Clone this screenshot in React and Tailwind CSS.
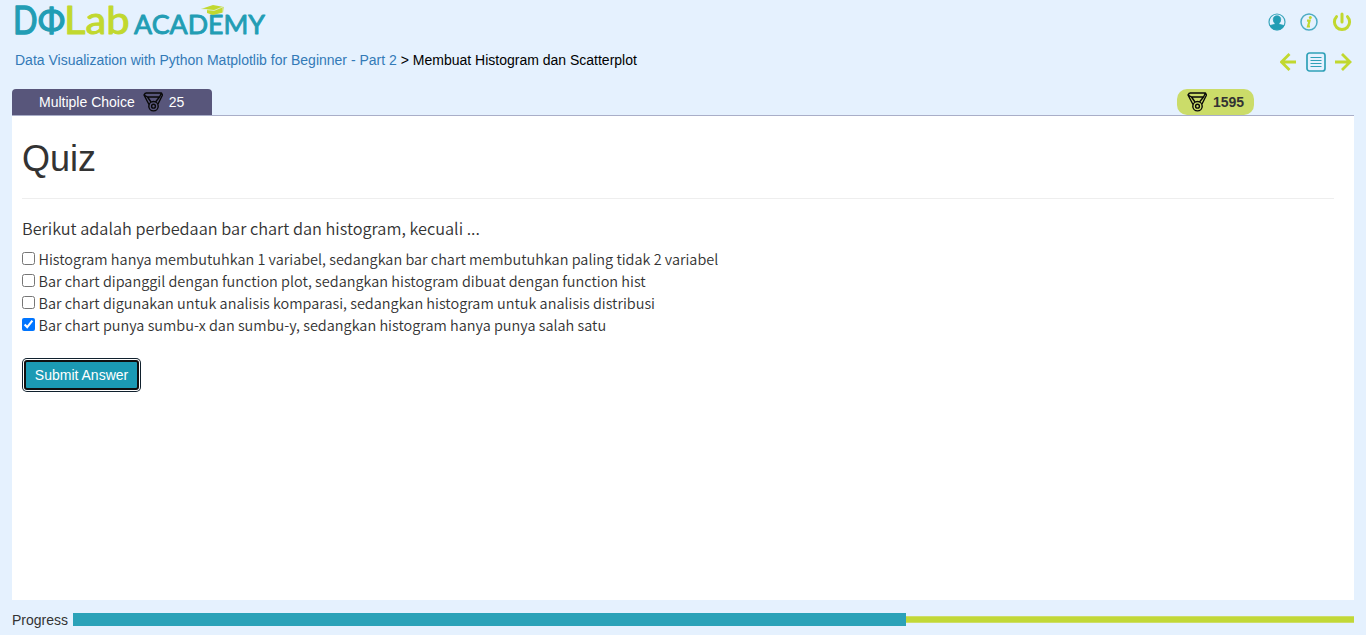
import React from 'react';

function Logo() {
  return (
    <svg width="256" height="42" viewBox="0 0 256 42" className="overflow-visible" fontFamily="Lato, sans-serif" strokeLinejoin="round">
      <g fill="#229db4" stroke="#229db4" strokeWidth="0.9">
        <text x="0" y="33.700" fontSize="38" textLength="24.500" lengthAdjust="spacingAndGlyphs" strokeWidth="1.4">D</text>
        <text x="25" y="31.500" fontSize="33" textLength="27" lengthAdjust="spacingAndGlyphs" strokeWidth="1.4">Φ</text>
        <text x="121" y="34.200" fontSize="27.500" textLength="131" lengthAdjust="spacingAndGlyphs">ACADEMY</text>
      </g>
      <g fill="#c1d82f" stroke="#c1d82f">
        <text x="51" y="33.700" fontSize="38.500" textLength="65.500" lengthAdjust="spacingAndGlyphs" strokeWidth="1">Lab</text>
      </g>
      <path d="m188 9 12-4 11 2-1 5.500-10 2.500-6-2V9.500Z" fill="#c1d82f" />
      <path d="m189 9 12 1.500 8.500-3.500M210 7v6" fill="none" stroke="#e5f1fe" strokeWidth=".7" />
    </svg>
  );
}

function Medal() {
  return (
    <svg width="20" height="20" viewBox="0 0 20 20" fill="none" stroke="#080808" strokeWidth="1.4" strokeLinejoin="round">
      <path d="M2.500 1h16l1 2-4.500 9M18.500 1l-2 4h-12L1 3l1.500-2M1 3l5 9.500M4.500 5 8 10M16.500 5 12.500 10" />
      <circle cx="10.500" cy="14.200" r="4.700" />
      <circle cx="10.500" cy="14.200" r="1.900" />
    </svg>
  );
}

function UserIcon() {
  return (
    <svg width="18" height="18" viewBox="0 0 18 18">
      <circle cx="9" cy="9" r="8" fill="#e5f1fe" stroke="#3ba6bc" strokeWidth="1.200" />
      <path d="M9 2.800c-2.500 0-3.900 1.700-3.700 4 .1 1.700.8 2.800 1.700 3.700v.8L2 12.500A7.800 7.800 0 0 0 16 12.500L11 11.300v-.8c.9-.9 1.600-2 1.700-3.700.2-2.300-1.200-4-3.700-4Z" fill="#229db4" stroke="#229db4" strokeWidth=".8" />
    </svg>
  );
}

function InfoIcon() {
  return (
    <svg width="18" height="18" viewBox="0 0 18 18">
      <circle cx="9" cy="9" r="8" fill="none" stroke="#4cacc3" strokeWidth="1.500" />
      <circle cx="10.300" cy="4.500" r="1.500" fill="#c1d82f" />
      <path d="M7 7.700h2.600L8 13.500h2" fill="none" stroke="#c1d82f" strokeWidth="2.200" />
    </svg>
  );
}

function PowerIcon() {
  return (
    <svg width="20" height="20" viewBox="0 0 20 20" fill="none" stroke="#c1d82f" strokeWidth="3" strokeLinecap="round">
      <path d="M10 2v8M4.500 4.700a7.600 7.600 0 1 0 11 0" />
    </svg>
  );
}

function Arrow({ right }) {
  return (
    <svg width="17" height="18" viewBox="0 0 17 18" fill="none" stroke="#c1d82f" strokeWidth="2.800">
      {right ? <path d="M0 9h14M7 1l8 8-8 8" /> : <path d="M16 9H2M9.500 1l-8 8 8 8" />}
    </svg>
  );
}

function ListIcon() {
  return (
    <svg width="20" height="20" viewBox="0 0 20 20" fill="none" stroke="#2fa1b8">
      <rect x="1" y="1" width="18" height="18" rx="2.500" strokeWidth="1.700" />
      <path d="M4.500 5.500h11M4.500 8.500h11M4.500 11.500h11M4.500 14.500h11" strokeWidth="1" />
    </svg>
  );
}

const options = [
  { text: 'Histogram hanya membutuhkan 1 variabel, sedangkan bar chart membutuhkan paling tidak 2 variabel', checked: false },
  { text: 'Bar chart dipanggil dengan function plot, sedangkan histogram dibuat dengan function hist', checked: false },
  { text: 'Bar chart digunakan untuk analisis komparasi, sedangkan histogram untuk analisis distribusi', checked: false },
  { text: 'Bar chart punya sumbu-x dan sumbu-y, sedangkan histogram hanya punya salah satu', checked: true },
];

export default function App() {
  return (
    <div className="flex h-[635px] w-full flex-col overflow-hidden bg-[#e5f1fe] px-3 font-['Liberation_Sans',sans-serif] text-sm leading-5 text-[#333]">
      <header className="flex h-[42px] shrink-0 justify-between pl-px pr-[2px]">
        <Logo />
        <div className="flex h-[43px] items-center gap-[14px]">
          <UserIcon />
          <InfoIcon />
          <PowerIcon />
        </div>
      </header>
      <div className="flex h-[47px] shrink-0 justify-between pl-[3px] pr-[2px]">
        <nav className="pt-2 text-black">
          <a className="text-[#337ab7]">Data Visualization with Python Matplotlib for Beginner - Part 2</a> &gt; Membuat Histogram dan Scatterplot
        </nav>
        <div className="flex h-[39px] items-center gap-[9px]">
          <Arrow />
          <ListIcon />
          <Arrow right />
        </div>
      </div>
      <div className="flex h-[27px] shrink-0 justify-between border-b border-[#a9aec8] pr-[100px]">
        <div className="flex h-[26px] w-[200px] items-center rounded-t-[4px] bg-[#58567b] pl-[27px] text-white">
          <span className="mr-[8px]">Multiple Choice</span>
          <Medal />
          <span className="ml-[6px]">25</span>
        </div>
        <div className="flex h-[26px] w-[77px] items-center rounded-[10px] bg-[#cbdc69] pl-[10px] font-bold">
          <Medal />
          <span className="ml-[6px]">1595</span>
        </div>
      </div>
      <main className="h-[484px] shrink-0 bg-white pl-[10px] pr-5">
        <h1 className="h-[83px] border-b border-[#eee] pt-[23px] text-[36px] leading-[40px]">Quiz</h1>
        <p className="mt-[15px] font-['Noto_Sans_CJK_SC',sans-serif] text-[16.31px] font-[350] leading-[28px]">Berikut adalah perbedaan bar chart dan histogram, kecuali ...</p>
        <div className="mt-[7px] font-['Noto_Sans_CJK_SC',sans-serif] text-[14.47px] font-[350]">
          {options.map((option) => (
            <label key={option.text} className="flex h-[22px] leading-[20px]">
              <input type="checkbox" defaultChecked={option.checked} className="mt-[3px] mr-[3.5px] h-[13px] w-[13px] accent-[#0075ff]" />
              <span>{option.text}</span>
            </label>
          ))}
        </div>
        <button className="mt-[23px] ml-[2px] flex h-[30px] w-[115px] items-center justify-center rounded-[3px] border-2 border-[#101010] bg-[#1b9ab4] text-white shadow-[0_0_0_1px_#fff,0_0_0_2px_#10202d]">Submit Answer</button>
      </main>
      <footer className="flex h-[39px] shrink-0 items-center">
        <span className="w-[61px]">Progress</span>
        <div className="h-[13px] w-[833px] bg-[#2ba2b8]" />
        <div className="h-[7px] flex-1 border-y border-[#cddd68] bg-[#c1d837]" />
      </footer>
    </div>
  );
}
